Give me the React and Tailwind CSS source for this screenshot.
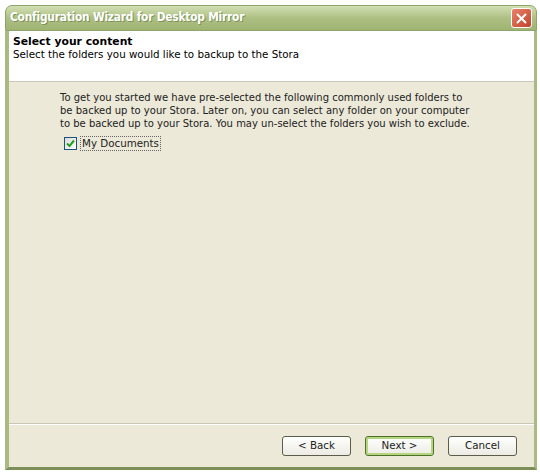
import React from "react";

const Btn = ({ children, primary }) => (
  <button
    className={
      primary
        ? "w-[69px] h-[20px] rounded-[3px] border border-[#4f6f2a] bg-gradient-to-b from-[#ffffff] to-[#ecebe4] text-[10.3px] text-[#222] shadow-[inset_0_0_0_2px_#b3d67f]"
        : "w-[69px] h-[20px] rounded-[3px] border border-[#5c5c4a] bg-gradient-to-b from-[#ffffff] to-[#ecebe4] text-[10.3px] text-[#222]"
    }
  >
    {children}
  </button>
);

export default function App() {
  return (
    <div className="w-[540px] h-[473px] bg-white pt-[5px] pl-[5px] font-['DejaVu_Sans',sans-serif]">
      <div className="w-[532px] h-[465px] flex flex-col">
        {/* title bar */}
        <div className="h-[26px] rounded-t-[7px] bg-gradient-to-b from-[#d3dfb4] via-[#adc083] to-[#9fb372] border border-[#8fa46a] flex items-center pl-[4px] pr-[4px]">
          <span className="font-['DejaVu_Sans_Condensed','DejaVu_Sans',sans-serif] text-[11.8px] tracking-[-0.2px] font-bold text-white [text-shadow:1px_1px_0_#7f9358]">
            Configuration Wizard for Desktop Mirror
          </span>
          <div className="ml-auto w-[21px] h-[20px] rounded-[3px] border border-white bg-gradient-to-br from-[#e8826a] to-[#c2412b] flex items-center justify-center">
            <svg width="11" height="11" viewBox="0 0 11 11">
              <path d="M1.5 1.5 L9.5 9.5 M9.5 1.5 L1.5 9.5" stroke="white" strokeWidth="2" strokeLinecap="round" />
            </svg>
          </div>
        </div>
        {/* body */}
        <div className="flex-1 flex flex-col border-l-[4px] border-r-[3px] border-b-[3px] border-l-[#a9bb82] border-r-[#a9bb82] border-b-[#7c8f58] bg-[#ece9d8]">
          <div className="h-[51px] bg-white border-b border-[#c9c7ba] pl-[4px] pt-[4px] text-[10.3px] leading-[13px] text-black">
            <div className="font-bold text-[10.8px]">Select your content</div>
            <div>Select the folders you would like to backup to the Stora</div>
          </div>
          <div className="flex-1 pl-[51px] pt-[9px] text-[10px] leading-[13px] text-[#222]">
            <p>
              To get you started we have pre-selected the following commonly used folders to
              <br />
              be backed up to your Stora. Later on, you can select any folder on your computer
              <br />
              to be backed up to your Stora. You may un-select the folders you wish to exclude.
            </p>
            <label className="mt-[6px] ml-[4px] flex items-center gap-[3px]">
              <span className="w-[13px] h-[13px] border border-[#1c5180] bg-gradient-to-br from-[#dcdcd6] to-white flex items-center justify-center">
                <svg width="9" height="9" viewBox="0 0 9 9">
                  <path d="M1 4.5 L3.5 7 L8 1.5" stroke="#21a121" strokeWidth="2" fill="none" />
                </svg>
              </span>
              <span className="border border-dotted border-[#666] px-[1px] text-[10.3px]">My Documents</span>
            </label>
          </div>
          <div className="h-[44px] border-t border-[#c9c7ba] shadow-[inset_0_1px_0_white] flex items-start justify-end gap-[14px] pt-[12px] pr-[17px]">
            <Btn>&lt; Back</Btn>
            <Btn primary>Next &gt;</Btn>
            <Btn>Cancel</Btn>
          </div>
        </div>
      </div>
    </div>
  );
}
